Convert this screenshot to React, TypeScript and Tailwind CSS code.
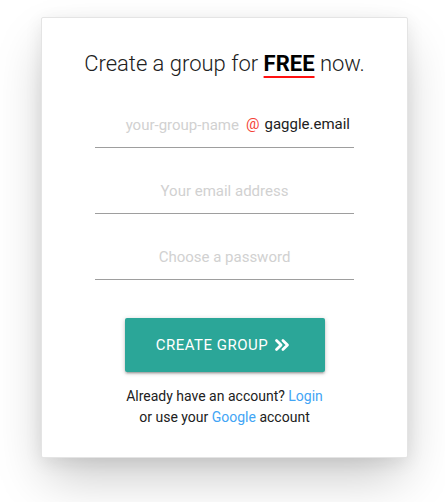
import React from "react";
import { ChevronsRight } from "lucide-react";

export default function App() {
  return (
    <div className="min-h-[502px] w-[445px] bg-white pt-[17px] pl-[41px]" style={{ fontFamily: "Roboto, 'Liberation Sans', sans-serif" }}>
      <div className="w-[367px] rounded-[2px] border border-[#e4e4e4] bg-white shadow-[0_24px_48px_-6px_rgba(0,0,0,0.22),0_4px_18px_0_rgba(0,0,0,0.08)] pt-[30px] pb-[29px] flex flex-col items-center">
        <h1 className="text-[22px] leading-[32px] font-light text-[#212121] text-center">
          Create a group for{" "}
          <span className="font-bold text-black underline decoration-[#ff1010] decoration-2 underline-offset-[5px]">FREE</span>{" "}
          now.
        </h1>

        <div className="mt-[19px] w-[259px] h-[49px] pt-[3px] border-b border-[#9e9e9e] flex items-center">
          <input
            className="flex-1 min-w-0 h-full bg-transparent text-right text-[15px] outline-none placeholder:text-[#d1d1d1] text-[#212121]"
            placeholder="your-group-name"
          />
          <span className="ml-[7px] mr-[5px] text-[15px] text-[#f44336]">@</span>
          <span className="pr-[4px] text-[15px] text-[#212121]">gaggle.email</span>
        </div>

        <div className="mt-[17px] w-[259px] h-[49px] pt-[3px] border-b border-[#9e9e9e] flex items-center">
          <input
            className="w-full h-full bg-transparent text-center text-[15px] outline-none placeholder:text-[#d1d1d1]"
            placeholder="Your email address"
          />
        </div>

        <div className="mt-[17px] w-[259px] h-[49px] pt-[3px] border-b border-[#9e9e9e] flex items-center">
          <input
            type="password"
            className="w-full h-full bg-transparent text-center text-[15px] outline-none placeholder:text-[#d1d1d1]"
            placeholder="Choose a password"
          />
        </div>

        <button className="mt-[38px] w-[200px] h-[54px] rounded-[2px] bg-[#2ba698] text-white text-[15px] tracking-[0.5px] uppercase flex items-center justify-center gap-[3px] shadow-[0_2px_2px_0_rgba(0,0,0,0.14),0_3px_1px_-2px_rgba(0,0,0,0.12),0_1px_5px_0_rgba(0,0,0,0.2)]">
          <span>Create Group</span>
          <ChevronsRight size={22} strokeWidth={3} />
        </button>

        <div className="mt-[14px] text-[14px] leading-[21px] text-[#212121] text-center">
          <div>
            Already have an account? <a className="text-[#42a5f5]">Login</a>
          </div>
          <div>
            or use your <a className="text-[#42a5f5]">Google</a> account
          </div>
        </div>
      </div>
    </div>
  );
}
